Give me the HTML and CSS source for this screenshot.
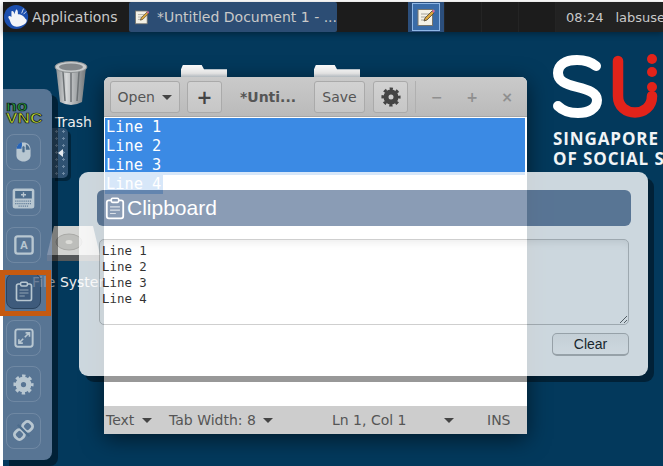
FILE: index.html
```html
<!DOCTYPE html>
<html lang="en">
<head>
  <meta charset="UTF-8">
  <title>noVNC clipboard</title>
  <link rel="stylesheet" href="styles.css">
</head>
<body>

<svg class="defs" width="0" height="0">
  <symbol id="note" viewBox="0 0 20 20">
    <rect x="2" y="2.500" width="14.500" height="16" fill="#f4f1e6" stroke="#77756c"/>
    <path d="M5 7h8M5 10h6M5 13h5" stroke="#a5a39a"/>
    <path d="M8 14l1 -3 7 -7 2 2 -7 7z" fill="#d9a53c" stroke="#4b4234" stroke-width=".8"/>
    <path d="M16 4l1.500 -1.500 1.500 1.500 -1.500 2z" fill="#d86a9a"/>
  </symbol>
  <symbol id="cog" viewBox="0 0 24 24">
    <circle cx="12" cy="12" r="6" fill="none" stroke="currentColor" stroke-width="6"/>
    <circle cx="12" cy="12" r="9.800" fill="none" stroke="currentColor" stroke-width="3.400" stroke-dasharray="3.850 3.850" stroke-dashoffset="1.920"/>
  </symbol>
  <symbol id="board" viewBox="0 0 24 28">
    <path d="M8 4H4.500Q2 4 2 6.500V23.500Q2 26 4.500 26H19.500Q22 26 22 23.500V6.500Q22 4 19.500 4H16" fill="none" stroke="currentColor" stroke-width="2.200"/>
    <rect x="7.500" y="1.500" width="9" height="5" rx="1.500" fill="none" stroke="currentColor" stroke-width="2"/>
    <path d="M6 12h12M6 16h12M6 20h7" stroke="currentColor" stroke-width="1.300" opacity=".7"/>
  </symbol>
</svg>

<div class="screen">

  <div class="topbar">
    <div class="apps">
      <svg class="whisker" viewBox="0 0 28 28" width="26" height="28">
        <circle cx="13" cy="14" r="13" fill="#1c4fae"/>
        <path d="M6 17C3 13 6 12 8 14L8 8C9 7 11 8 11 11L13 6C15 6 15 9 15 11C18 11 22 13 23 16C25 17 25 19 23 21C20 24 14 25 11 24C8 23 7 20 6 17z" fill="#f2f4f8"/>
        <path d="M19 10l2 -5M21 11l3 -3" stroke="#dfe6f3"/>
      </svg>
      <span>Applications</span>
    </div>
    <div class="task">
      <svg width="20" height="20"><use href="#note"/></svg>
      <span>*Untitled Document 1 - ...</span>
    </div>
    <div class="pager">
      <div class="pager-cell pager-on"><svg width="20" height="20"><use href="#note"/></svg></div>
      <div class="pager-cell"></div>
      <div class="pager-cell"></div>
      <div class="pager-cell"></div>
    </div>
    <div class="tray">
      <span>08:24</span>
      <span>labsuser</span>
    </div>
  </div>

  <div class="wall">
    <!-- desktop icons -->
    <div class="icon icon-trash">
      <svg viewBox="0 0 34 46" width="34" height="46">
        <defs>
          <linearGradient id="can" x1="0" x2="1" y1="0" y2="0">
            <stop offset="0" stop-color="#8b8f92"/>
            <stop offset=".35" stop-color="#d6d8d9"/>
            <stop offset="1" stop-color="#74797c"/>
          </linearGradient>
        </defs>
        <path d="M2 7L6 42Q17 48 28 42L32 7z" fill="url(#can)"/>
        <path d="M9 12L11 41M17 12V42M25 12L23 41" stroke="#6d7275" stroke-width="1.500"/>
        <ellipse cx="17" cy="7" rx="16" ry="5.500" fill="#c9cccd" stroke="#8c9092"/>
        <ellipse cx="17" cy="7" rx="12" ry="3.500" fill="#84888b"/>
      </svg>
    </div>
    <div class="label label-trash">Trash</div>

    <div class="folder folder-one"></div>
    <div class="folder folder-two"></div>

    <div class="icon icon-disk">
      <svg viewBox="0 0 53 40" width="53" height="40">
        <path d="M7 1H46L53 30H0z" fill="#d2d3d1"/>
        <path d="M0 30H53V36H0z" fill="#55585a"/>
        <ellipse cx="22" cy="17" rx="13" ry="8" fill="#bdbebb" stroke="#a9a9a6"/>
        <ellipse cx="22" cy="17" rx="3.500" ry="2" fill="#dcdcd8"/>
      </svg>
    </div>
    <div class="label label-disk">File System</div>

    <svg class="logo" viewBox="0 0 110 70" width="110" height="70">
      <path d="M43 14C37 9 30 8 24 8C12 8 5 13 5 21C5 29 12 32 24 35C36 38 44 41 44 48C44 57 35 61 25 61C16 61 9 58 5 54" fill="none" stroke="#fff" stroke-width="10" stroke-linecap="round"/>
      <path d="M65 9V44C65 66 99 66 99 44" fill="none" stroke="#e2231a" stroke-width="10.500" stroke-linecap="round"/>
      <circle cx="99" cy="7" r="5" fill="#e2231a"/>
      <circle cx="99" cy="20" r="5" fill="#e2231a"/>
      <circle cx="99" cy="35" r="5" fill="#e2231a"/>
    </svg>
    <div class="logo-text">SINGAPORE<br>OF SOCIAL S</div>
  </div>

  <!-- gedit window -->
  <div class="window">
    <div class="titlebar">
      <button class="tb-btn tb-open">Open <i class="caret"></i></button>
      <button class="tb-btn tb-new">+</button>
      <div class="tb-title">*Unti...</div>
      <button class="tb-btn tb-save">Save</button>
      <button class="tb-btn tb-gear"><svg width="20" height="20"><use href="#cog"/></svg></button>
      <div class="tb-controls">
        <span>&minus;</span>
        <span>+</span>
        <span>&times;</span>
      </div>
    </div>
    <div class="editor">
      <div class="line">Line 1</div>
      <div class="line">Line 2</div>
      <div class="line">Line 3</div>
      <div class="line line-last"><span>Line 4</span></div>
    </div>
    <div class="statusbar">
      <span class="st-text">Text <i class="caret"></i></span>
      <span class="st-tab">Tab Width: 8 <i class="caret"></i></span>
      <span class="st-pos">Ln 1, Col 1</span>
      <i class="caret st-caret"></i>
      <span class="st-ins">INS</span>
    </div>
  </div>

  <!-- noVNC control bar -->
  <div class="handle"><i class="handle-arrow"></i></div>
  <div class="sidebar">
    <div class="vnc-logo"><span class="vnc-no">no</span><span class="vnc-name">VNC</span></div>
    <div class="vnc-btn">
      <svg viewBox="0 0 24 28" width="19" height="22">
        <path d="M3 12C3 5 7 2 12 2C17 2 21 5 21 12V18C21 23 17 26 12 26C7 26 3 23 3 18z" fill="#e6ebef"/>
        <path d="M3 12C3 5 7 2 10 2V10H3z" fill="#2f6fd0"/>
        <rect x="10" y="6" width="4" height="9" rx="2" fill="#5f7a99" stroke="#e6ebef"/>
        <path d="M15 4C18 5 20 8 20 11H15z" fill="#5f7a99"/>
      </svg>
    </div>
    <div class="vnc-btn">
      <svg viewBox="0 0 30 30" width="25" height="25">
        <rect x="2" y="3" width="26" height="24" rx="3" fill="#e6ebef"/>
        <rect x="5" y="6" width="20" height="9" fill="#5f7a99"/>
        <path d="M15 7.500v6M12 10.500h6" stroke="#e6ebef" stroke-width="1.600"/>
        <path d="M5 18h20M5 21h20M9 24h12" stroke="#7b90aa" stroke-width="1.500" stroke-dasharray="1.500 1"/>
      </svg>
    </div>
    <div class="vnc-btn">
      <svg viewBox="0 0 28 28" width="22" height="22">
        <rect x="3" y="3" width="22" height="22" rx="3" fill="none" stroke="#e6ebef" stroke-width="3"/>
        <text x="14" y="19.500" text-anchor="middle" class="key-a">A</text>
      </svg>
    </div>
    <div class="vnc-btn vnc-active"><svg class="svg-light" width="18" height="21"><use href="#board"/></svg></div>
    <div class="vnc-btn">
      <svg viewBox="0 0 28 28" width="22" height="22">
        <rect x="3" y="3" width="22" height="22" rx="3" fill="none" stroke="#e6ebef" stroke-width="2.500"/>
        <path d="M15 13L20 8M16 7.500h5v5M13 15L8 20M7.500 15.500v5h5" fill="none" stroke="#e6ebef" stroke-width="2"/>
      </svg>
    </div>
    <div class="vnc-btn"><svg class="svg-light" width="21" height="21"><use href="#cog"/></svg></div>
    <div class="vnc-btn">
      <svg viewBox="0 0 28 28" width="23" height="23">
        <g fill="none" stroke="#e6ebef" stroke-width="3.400" transform="rotate(-45 14 14)">
          <rect x="1.500" y="8.500" width="11" height="11" rx="4"/>
          <rect x="15.500" y="8.500" width="11" height="11" rx="4"/>
        </g>
        <path d="M7 7l14 14" stroke="#5f7a99" stroke-width="3"/>
      </svg>
    </div>
  </div>

  <!-- clipboard panel -->
  <div class="clip-panel">
    <div class="clip-head">
      <svg width="20" height="23"><use href="#board"/></svg>
      <span>Clipboard</span>
    </div>
    <textarea class="clip-text" spellcheck="false">Line 1
Line 2
Line 3
Line 4</textarea>
    <div class="clip-foot"><button class="clip-clear">Clear</button></div>
  </div>

  <div class="callout"></div>
</div>

</body>
</html>
```

FILE: styles.css
```css
* {
  box-sizing: border-box;
}
html, body {
  margin: 0;
  background: #fff;
}
.defs {
  position: absolute;
}
.screen {
  position: relative;
  width: 663px;
  height: 466px;
  padding: 2px 0 0 3px;
  display: flex;
  flex-direction: column;
  overflow: hidden;
  font-family: "DejaVu Sans", sans-serif;
}

/* top panel */
.topbar {
  height: 30px;
  flex: none;
  display: flex;
  align-items: stretch;
  background: #1c1c1c;
  color: #c9c9c9;
  font-size: 14px;
  box-shadow: 0 2px 6px rgba(0, 0, 0, .35);
  position: relative;
  z-index: 1;
}
.apps {
  width: 126px;
  display: flex;
  align-items: center;
  gap: 2px;
  padding-left: 1px;
}
.task {
  width: 208px;
  display: flex;
  align-items: center;
  gap: 7px;
  padding-left: 5px;
  background: #2c4d74;
  border-radius: 2px;
  white-space: nowrap;
}
.pager {
  display: flex;
  margin-left: 71px;
}
.pager-cell {
  width: 37px;
  border-right: 1px solid #242424;
  display: flex;
  align-items: center;
  justify-content: center;
}
.pager-on {
  background: #2c4f7c;
}
.pager-on svg {
  box-sizing: content-box;
  padding: 3px;
  width: 20px;
  height: 20px;
  border: 1px solid #8fb7e6;
  background: #3a6ca8;
}
.tray {
  flex: 1;
  display: flex;
  align-items: center;
  gap: 12px;
  padding-left: 10px;
  background: #222;
  font-size: 13px;
  white-space: nowrap;
  overflow: hidden;
}

/* desktop */
.wall {
  flex: 1;
  background: #03395c;
}
.icon, .label, .folder, .logo, .logo-text, .window, .handle, .sidebar, .clip-panel, .callout {
  position: absolute;
}
.icon-trash {
  left: 54px;
  top: 60px;
}
.icon-disk {
  left: 47px;
  top: 225px;
}
.label {
  color: #eee;
  font-size: 14px;
}
.label-trash {
  left: 55px;
  top: 114px;
}
.label-disk {
  left: 32px;
  top: 274px;
}
.folder {
  top: 65px;
  width: 46px;
  height: 14px;
  background: linear-gradient(#fff, #fff 60%, #c3d0da);
  clip-path: polygon(0 30%, 4% 0, 45% 0, 50% 30%, 100% 30%, 100% 100%, 0 100%);
}
.folder-one {
  left: 181px;
}
.folder-two {
  left: 314px;
}
.logo {
  left: 553px;
  top: 52px;
}
.logo-text {
  left: 553px;
  top: 129px;
  width: 110px;
  overflow: hidden;
  white-space: nowrap;
  color: #f1f4f6;
  font: bold 17px/19.500px "Open Sans", sans-serif;
  letter-spacing: .9px;
}

/* editor window */
.window {
  left: 104px;
  top: 77px;
  width: 423px;
  height: 357px;
  display: flex;
  flex-direction: column;
  background: #fff;
  border-radius: 6px 6px 0 0;
  box-shadow: 0 5px 22px rgba(0, 0, 0, .55);
}
.titlebar {
  height: 40px;
  flex: none;
  display: flex;
  align-items: center;
  padding: 0 6px;
  background: linear-gradient(#cacaca, #bababa);
  border-radius: 6px 6px 0 0;
  border-bottom: 1px solid #a6a6a6;
}
.tb-btn {
  height: 32px;
  padding: 0;
  font: 14px "DejaVu Sans", sans-serif;
  color: #555;
  background: linear-gradient(#d2d2d2, #c6c6c6);
  border: 1px solid #aaa;
  border-radius: 3px;
}
.tb-open {
  width: 70px;
}
.tb-new {
  width: 35px;
  margin-left: 7px;
  font-size: 19px;
  font-weight: bold;
  color: #444;
}
.tb-title {
  width: 92px;
  text-align: center;
  font-size: 14px;
  font-weight: bold;
  color: #555;
}
.tb-save {
  width: 51px;
}
.tb-gear {
  width: 35px;
  margin-left: 8px;
  color: #444;
  display: flex;
  align-items: center;
  justify-content: center;
}
.tb-controls {
  flex: 1;
  display: flex;
  justify-content: space-between;
  margin-left: 7px;
  padding: 0 8px 0 15px;
  height: 32px;
  align-items: center;
  border-left: 1px solid #b0b0b0;
  color: #8f8f8f;
  font-size: 14px;
  font-weight: bold;
}
.caret {
  display: inline-block;
  width: 0;
  height: 0;
  margin-left: 3px;
  vertical-align: 2px;
  border: 5px solid transparent;
  border-top: 5px solid #444;
  border-bottom: 0;
}
.editor {
  flex: 1;
  padding: 1px 2px 0 1px;
  font: 15.300px/19px "DejaVu Sans Mono", monospace;
  color: #fff;
}
.line {
  background: #3b8ae4;
  padding-left: 1px;
}
.line-last {
  background: none;
  padding-left: 0;
}
.line-last span {
  display: inline-block;
  background: #3b8ae4;
  padding: 0 2px 0 1px;
}
.statusbar {
  height: 28px;
  flex: none;
  display: flex;
  align-items: center;
  background: #cdcdcd;
  color: #555;
  font-size: 14px;
  white-space: nowrap;
  padding-left: 2px;
}
.st-text {
  width: 63px;
}
.st-tab {
  width: 163px;
}
.st-pos {
  width: 112px;
}
.st-caret {
  margin: 0;
}
.st-ins {
  margin-left: 33px;
}

/* noVNC side bar */
.handle {
  left: 52px;
  top: 128px;
  width: 16px;
  height: 50px;
  background: radial-gradient(circle, #6e8aa4 1px, transparent 1.300px) 1px 0 / 7px 7px, #2f5272;
  border-radius: 0 5px 5px 0;
  box-shadow: 3px 3px 0 rgba(0, 0, 0, .35);
  display: flex;
  align-items: center;
  justify-content: center;
}
.handle-arrow {
  width: 0;
  height: 0;
  border: 4px solid transparent;
  border-left: 0;
  border-right: 5px solid #e6ebef;
}
.sidebar {
  left: 3px;
  top: 89px;
  width: 49px;
  height: 371px;
  padding: 12px 0 0 3px;
  display: flex;
  flex-direction: column;
  gap: 10.500px;
  background: #6e84a3;
  opacity: .8;
  border-radius: 0 8px 8px 0;
  box-shadow: 6px 6px 0 rgba(0, 0, 0, .5);
}
.vnc-logo {
  height: 22px;
  display: flex;
  flex-direction: column;
  font: bold 13px/11px "Liberation Sans", sans-serif;
}
.vnc-no {
  width: 20px;
  color: #2fae2f;
  -webkit-text-stroke: .7px #0c0c0c;
  font-size: 14px;
  transform-origin: left;
  transform: scaleX(1.250);
}
.vnc-name {
  width: 30px;
  color: #f0ff1e;
  -webkit-text-stroke: .7px #0c0c0c;
  font-size: 15px;
  transform-origin: left;
  transform: scaleX(1.150);
}
.vnc-btn {
  width: 35px;
  height: 36px;
  flex: none;
  display: flex;
  align-items: center;
  justify-content: center;
  border: 1px solid rgba(255, 255, 255, .2);
  border-radius: 8px;
}
.vnc-active {
  background: #4d6484;
  border-color: #34465f;
}
.svg-light {
  color: #e6ebef;
}
.key-a {
  font: bold 14px "Liberation Sans", sans-serif;
  fill: #e6ebef;
}

/* clipboard panel */
.clip-panel {
  left: 79px;
  top: 172px;
  width: 569px;
  height: 204px;
  padding: 18px 17px 0 18px;
  background: #fff;
  opacity: .8;
  border-radius: 9px;
  box-shadow: 6px 6px 0 rgba(0, 0, 0, .5);
}
.clip-head {
  height: 36px;
  display: flex;
  align-items: center;
  gap: 2px;
  padding-left: 8px;
  background: #6e84a3;
  color: #fff;
  border-radius: 6px;
  font: 21px "Liberation Sans", sans-serif;
}
.clip-text {
  display: block;
  width: 530px;
  height: 86px;
  margin: 13px 0 0 2px;
  padding: 3px 2px;
  font: 12.400px/16px "DejaVu Sans Mono", monospace;
  color: #000;
  background: #fff;
  border: 1px solid #c4c4c4;
  border-radius: 5px;
  box-shadow: inset 0 8px 8px -6px rgba(0, 0, 0, .1);
  outline: none;
}
.clip-foot {
  display: flex;
  justify-content: flex-end;
  margin: 8px 2px 0 0;
}
.clip-clear {
  width: 77px;
  height: 23px;
  padding: 0;
  font: 14px "Liberation Sans", sans-serif;
  color: #222;
  background: linear-gradient(#f5f5f5, #fff);
  border: 1px solid #bbb;
  border-bottom-width: 2px;
  border-radius: 5px;
}

.callout {
  left: 0;
  top: 270px;
  width: 51px;
  height: 46px;
  border: 5px solid #c55a11;
}
```
